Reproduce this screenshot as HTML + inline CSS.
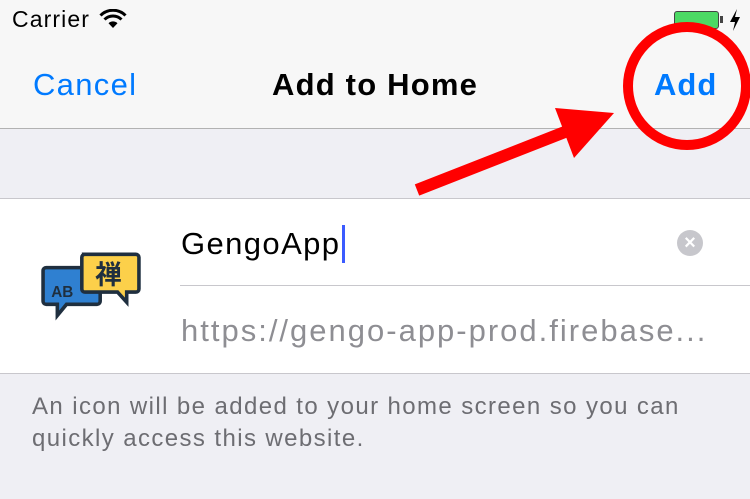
<!DOCTYPE html>
<html><head><meta charset="utf-8"><style>
*{margin:0;padding:0;box-sizing:border-box}
body{width:750px;height:499px;overflow:hidden;background:#efeff4;font-family:"Liberation Sans","Noto Sans CJK JP",sans-serif;position:relative}
.nav{position:absolute;left:0;top:0;width:750px;height:129px;background:#f7f7f7;border-bottom:1.5px solid #b2b2b2}
.t{position:absolute;white-space:nowrap}
.white{position:absolute;left:0;top:198px;width:750px;height:176px;background:#fff;border-top:1px solid #c8c7cc;border-bottom:1px solid #c8c7cc}
</style></head><body>
<div class="nav">
<div class="t" style="left:12px;top:6px;font-size:23px;color:#000;letter-spacing:1.1px">Carrier</div>
<svg class="t" style="left:99px;top:9px" width="28" height="20" viewBox="0 0 28 20"><path d="M14 19 L9.5 14.2 A6.5 6.5 0 0 1 18.5 14.2Z" fill="#000"/><path d="M5.5 10.5 A12 12 0 0 1 22.5 10.5" stroke="#000" stroke-width="3" fill="none"/><path d="M1.5 6.5 A17.5 17.5 0 0 1 26.5 6.5" stroke="#000" stroke-width="3" fill="none"/></svg>
<div class="t" style="left:674px;top:11px;width:45px;height:18px;border:1.5px solid #444;border-radius:3px;background:#4cd964"></div>
<div class="t" style="left:720px;top:16px;width:3px;height:7px;background:#444"></div>
<svg class="t" style="left:729px;top:9px" width="12" height="22" viewBox="0 0 12 22"><path d="M8 0 L1 13 H6 L4 22 L11 8 H6Z" fill="#000"/></svg>
<div class="t" style="left:33px;top:67px;font-size:31px;color:#007aff;letter-spacing:1.3px">Cancel</div>
<div class="t" style="left:272px;top:67px;font-size:31px;font-weight:bold;color:#000;letter-spacing:1.2px">Add to Home</div>
<div class="t" style="left:654px;top:67px;font-size:31px;font-weight:bold;color:#007aff;letter-spacing:1px">Add</div>
</div>
<div class="white">
<svg class="t" style="left:40px;top:52px" width="102" height="74" viewBox="0 0 100 70">
<path d="M6 15 h50 a3 3 0 0 1 3 3 v30 a3 3 0 0 1 -3 3 h-30 l-9 11 v-11 h-11 a3 3 0 0 1 -3 -3 v-30 a3 3 0 0 1 3 -3z" fill="#2f80d1" stroke="#1f2f3f" stroke-width="3.5"/>
<text x="11" y="44" font-size="15" font-weight="bold" fill="#1f2f3f" font-family="Liberation Sans">AB</text>
<path d="M41 2 h53 a3 3 0 0 1 3 3 v31 a3 3 0 0 1 -3 3 h-9 v10 l-9 -10 h-32 a3 3 0 0 1 -3 -3 v-31 a3 3 0 0 1 3 -3z" fill="#fcd04a" stroke="#1f2f3f" stroke-width="3.5"/>
<text x="54" y="31" font-size="26" font-weight="bold" fill="#1f2f3f" font-family="Noto Sans CJK JP">禅</text>
</svg>
<div class="t" style="left:181px;top:27px;font-size:31px;color:#000;letter-spacing:1.4px">GengoApp</div>
<div class="t" style="left:342px;top:26px;width:3px;height:38px;background:#3b5bff"></div>
<div class="t" style="left:677px;top:31px;width:26px;height:26px;border-radius:50%;background:#c7c7cc;color:#fff;font-size:20px;line-height:26px;text-align:center;font-weight:bold">×</div>
<div class="t" style="left:180px;top:86px;width:570px;height:1px;background:#c8c7cc"></div>
<div class="t" style="left:181px;top:114px;font-size:31px;color:#8e8e93;letter-spacing:2px">https://gengo-app-prod.firebase...</div>
</div>
<div class="t" style="left:32px;top:391px;font-size:24px;line-height:32px;color:#6d6d72;letter-spacing:1.4px">An icon will be added to your home screen so you can<br>quickly access this website.</div>
<svg class="t" style="left:0;top:0" width="750" height="499">
<circle cx="687" cy="86" r="59" fill="none" stroke="#ff0000" stroke-width="10"/>
<line x1="417" y1="190" x2="575" y2="128" stroke="#ff0000" stroke-width="12"/>
<polygon points="555,108 614,113 574,158" fill="#ff0000"/>
</svg>
</body></html>
